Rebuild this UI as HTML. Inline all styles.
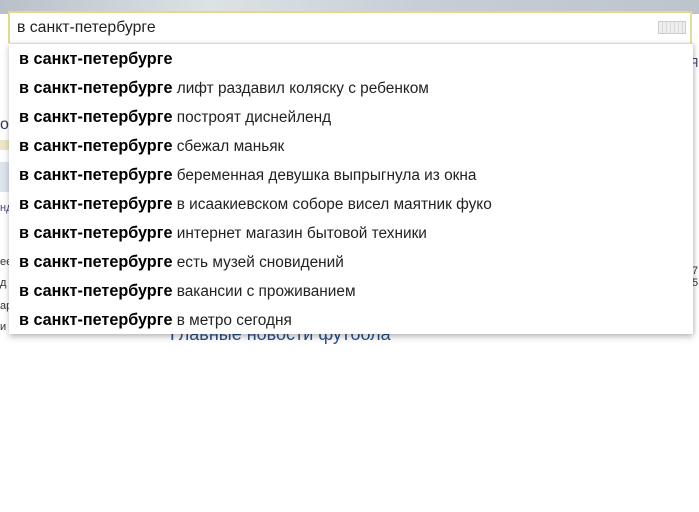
<!DOCTYPE html>
<html><head><meta charset="utf-8"><style>
html,body{margin:0;padding:0;width:699px;height:512px;overflow:hidden;background:#fff;font-family:"Liberation Sans",Arial,sans-serif;}
.top{position:absolute;left:0;top:0;width:699px;height:14px;background:linear-gradient(90deg,#b9c0c8,#dde2e6 30%,#c8ced6 60%,#bcc4cc);}
.bg{position:absolute;font-size:13px;color:#333;}
.input{position:absolute;left:8px;top:11px;width:684px;height:32px;background:#fff;border:2px solid #e6d889;border-right:2px solid #e6dc9e;border-bottom:none;box-sizing:border-box;}
.input span{position:absolute;left:7px;top:6px;font-size:15.8px;color:#222;}
.kbd{position:absolute;right:4px;top:8px;width:26px;height:11px;border:1px solid #ccc;background:repeating-linear-gradient(90deg,#eee 0 3px,#d8d8d8 3px 4px);}
.dd{position:absolute;left:9px;top:43px;width:684px;height:290px;background:#fff;border-top:1px solid #d8d8d8;box-shadow:0 3px 6px rgba(0,0,0,0.25),2px 0 3px rgba(0,0,0,0.08);}
.row{position:absolute;left:10px;height:29px;line-height:29px;font-size:15.4px;color:#222;white-space:nowrap;margin-top:1px;}
.row b{color:#000;font-size:16.2px;}
</style></head><body>
<div class="top"></div>
<div class="bg" style="left:0;top:116px;color:#336;font-size:16px">о</div>
<div class="bg" style="left:0;top:140px;width:10px;height:10px;background:#ece6c8"></div>
<div class="bg" style="left:0;top:162px;width:10px;height:30px;background:#dde4ee"></div>
<div class="bg" style="left:0;top:202px;color:#447;font-size:11px">нд</div>
<div class="bg" style="left:0;top:256px;font-size:11px">ее</div>
<div class="bg" style="left:0;top:277px;font-size:11px">д</div>
<div class="bg" style="left:0;top:300px;font-size:11px">ар</div>
<div class="bg" style="left:0;top:321px;font-size:11px">и</div>
<div class="bg" style="left:689px;top:55px;color:#447;font-size:13px">Я</div>
<div class="bg" style="left:692px;top:265px;font-size:11px">7<br>5</div>
<div class="bg" style="left:170px;top:324px;color:#2a4f8a;font-size:18px">Главные новости футбола</div>
<div class="input"><span>в санкт-петербурге</span><div class="kbd"></div></div>
<div class="dd">
<div class="row" style="top:0"><b>в санкт-петербурге</b></div>
<div class="row" style="top:29px"><b>в санкт-петербурге</b> лифт раздавил коляску с ребенком</div>
<div class="row" style="top:58px"><b>в санкт-петербурге</b> построят диснейленд</div>
<div class="row" style="top:87px"><b>в санкт-петербурге</b> сбежал маньяк</div>
<div class="row" style="top:116px"><b>в санкт-петербурге</b> беременная девушка выпрыгнула из окна</div>
<div class="row" style="top:145px"><b>в санкт-петербурге</b> в исаакиевском соборе висел маятник фуко</div>
<div class="row" style="top:174px"><b>в санкт-петербурге</b> интернет магазин бытовой техники</div>
<div class="row" style="top:203px"><b>в санкт-петербурге</b> есть музей сновидений</div>
<div class="row" style="top:232px"><b>в санкт-петербурге</b> вакансии с проживанием</div>
<div class="row" style="top:261px"><b>в санкт-петербурге</b> в метро сегодня</div>
</div>
</body></html>
